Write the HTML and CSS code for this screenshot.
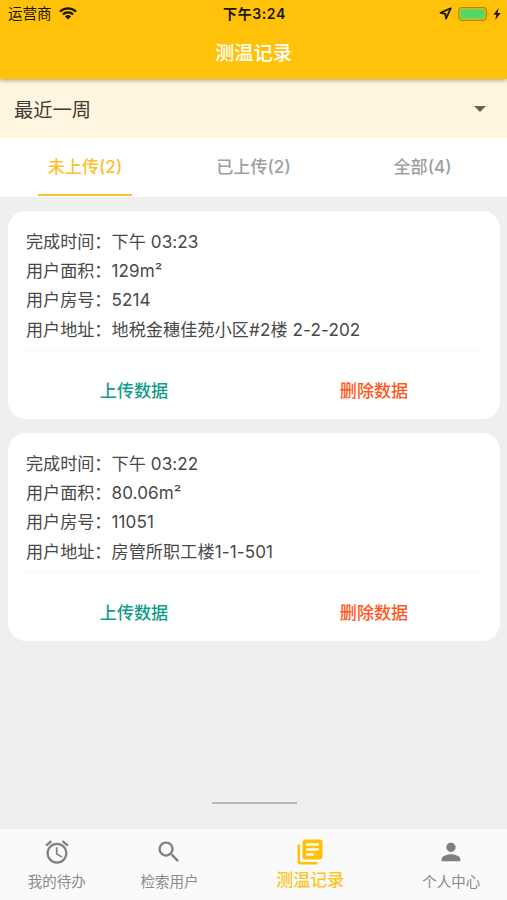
FILE: index.html
```
<!DOCTYPE html>
<html lang="zh-CN">
<head>
    <meta charset="UTF-8">
    <meta name="viewport" content="width=device-width, initial-scale=1.0">
    <title>测温记录</title>
    <link rel="stylesheet" href="styles.css">
</head>
<body>
    <header class="header">
        <div class="status-bar">
            <div class="status-left">
                <span>运营商</span>
                <svg class="wifi" viewBox="0 0 18 13">
                    <path d="M1 4.6a11.5 11.5 0 0 1 16 0M3.9 7.5a7.4 7.4 0 0 1 10.2 0" fill="none" stroke="#1c1700" stroke-width="2.3"/>
                    <path d="M9 12.6L5.9 9.5a4.5 4.5 0 0 1 6.2 0z" fill="#1c1700"/>
                </svg>
            </div>
            <div class="status-time">下午3:24</div>
            <div class="status-right">
                <svg class="location" viewBox="0 0 12 12">
                    <path d="M10.8 1.2L1.4 5.4l4.4.9.7 4.4z" fill="none" stroke="#1c1700" stroke-width="1.6" stroke-linejoin="round"/>
                </svg>
                <svg class="battery" viewBox="0 0 32 14">
                    <rect x=".7" y=".7" width="27.6" height="12.6" rx="3" fill="none" stroke="#a9861a" stroke-width="1.2"/>
                    <rect x="2.3" y="2.3" width="24.4" height="9.4" rx="1.4" fill="#4cd964"/>
                    <path d="M29.8 4.8q1.8 2.2 0 4.4z" fill="#a9861a"/>
                </svg>
                <svg class="bolt" viewBox="0 0 8 12">
                    <path d="M5.6 0L.4 6.8h3L2.2 12l5.4-7.1H4.5z" fill="#1c1700"/>
                </svg>
            </div>
        </div>
        <h1>测温记录</h1>
    </header>

    <div class="filter">
        <span>最近一周</span>
        <svg class="arrow" viewBox="0 0 12 6"><path d="M0 0h12L6 6z" fill="#66625a"/></svg>
    </div>

    <div class="tabs">
        <div class="tab active"><span>未上传(2)</span></div>
        <div class="tab"><span>已上传(2)</span></div>
        <div class="tab"><span>全部(4)</span></div>
    </div>

    <main class="content">
        <div class="card">
            <div class="info">
                <p><span class="label">完成时间：</span>下午 03:23</p>
                <p><span class="label">用户面积：</span>129m²</p>
                <p><span class="label">用户房号：</span>5214</p>
                <p><span class="label">用户地址：</span>地税金穗佳苑小区#2楼 2-2-202</p>
            </div>
            <div class="actions">
                <span class="upload">上传数据</span>
                <span class="delete">删除数据</span>
            </div>
        </div>
        <div class="card">
            <div class="info">
                <p><span class="label">完成时间：</span>下午 03:22</p>
                <p><span class="label">用户面积：</span>80.06m²</p>
                <p><span class="label">用户房号：</span>11051</p>
                <p><span class="label">用户地址：</span>房管所职工楼1-1-501</p>
            </div>
            <div class="actions">
                <span class="upload">上传数据</span>
                <span class="delete">删除数据</span>
            </div>
        </div>
        <div class="end-line"></div>
    </main>

    <nav class="bottom-nav">
        <div class="nav-item">
            <svg viewBox="0 0 24 24"><path d="M22 5.72l-4.6-3.86-1.29 1.53 4.6 3.86L22 5.72zM7.88 3.39L6.6 1.86 2 5.71l1.29 1.53 4.59-3.85zM12.5 8H11v6l4.75 2.85.75-1.23-4-2.37V8zM12 4c-4.97 0-9 4.03-9 9s4.02 9 9 9c4.97 0 9-4.03 9-9s-4.03-9-9-9zm0 16c-3.87 0-7-3.13-7-7s3.13-7 7-7 7 3.13 7 7-3.13 7-7 7z"/></svg>
            <span>我的待办</span>
        </div>
        <div class="nav-item">
            <svg viewBox="0 0 24 24"><path d="M15.5 14h-.79l-.28-.27C15.41 12.59 16 11.11 16 9.5 16 5.91 13.09 3 9.5 3S3 5.91 3 9.5 5.91 16 9.5 16c1.61 0 3.09-.59 4.23-1.57l.27.28v.79l5 4.99L20.49 19l-4.99-5zm-6 0C7.01 14 5 11.99 5 9.5S7.01 5 9.5 5 14 7.01 14 9.5 11.99 14 9.5 14z"/></svg>
            <span>检索用户</span>
        </div>
        <div class="nav-item active">
            <svg viewBox="0 0 24 24"><path d="M4 6H2v14c0 1.1.9 2 2 2h14v-2H4V6zm16-4H8c-1.1 0-2 .9-2 2v12c0 1.1.9 2 2 2h12c1.1 0 2-.9 2-2V4c0-1.1-.9-2-2-2zm-1 9H9V9h10v2zm-4 4H9v-2h6v2zm4-8H9V5h10v2z"/></svg>
            <span>测温记录</span>
        </div>
        <div class="nav-item">
            <svg viewBox="0 0 24 24"><path d="M12 12c2.21 0 4-1.79 4-4s-1.79-4-4-4-4 1.79-4 4 1.79 4 4 4zm0 2c-2.67 0-8 1.34-8 4v2h16v-2c0-2.66-5.33-4-8-4z"/></svg>
            <span>个人中心</span>
        </div>
    </nav>
</body>
</html>
```
FILE: styles.css
```
* {
    box-sizing: border-box;
}
body {
    font-family: Inter, "Noto Sans CJK SC", sans-serif;
    background-color: #efefef;
    color: #484848;
    margin: 0;
    height: 900px;
    display: flex;
    flex-direction: column;
    overflow: hidden;
}
svg {
    display: block;
}
.header {
    height: 79px;
    flex-shrink: 0;
    background-color: #ffc10a;
    box-shadow: 0 1px 5px rgba(0, 0, 0, 0.4);
    z-index: 1;
}
.status-bar {
    height: 27px;
    padding: 0 6px 0 8px;
    display: grid;
    grid-template-columns: 1fr auto 1fr;
    align-items: center;
    font-size: 14.5px;
    line-height: 27px;
    color: #1c1700;
}
.status-left, .status-right {
    display: flex;
    align-items: center;
}
.status-right {
    justify-content: flex-end;
}
.status-time {
    font-weight: 600;
    font-size: 14px;
    letter-spacing: 0.6px;
}
.wifi {
    width: 18px;
    height: 13px;
    margin-left: 7px;
}
.location {
    width: 13px;
    height: 13px;
    margin-right: 6px;
}
.battery {
    width: 32px;
    height: 14px;
    margin-right: 3px;
}
.bolt {
    width: 8px;
    height: 12px;
}
.header h1 {
    margin: 0;
    font-size: 19.3px;
    font-weight: 500;
    line-height: 53px;
    text-align: center;
    color: #fff;
}
.filter {
    height: 59px;
    flex-shrink: 0;
    padding: 0 21px 0 14px;
    display: flex;
    align-items: center;
    justify-content: space-between;
    background-color: #fff6df;
    color: #3d3a33;
    font-size: 19.3px;
}
.arrow {
    width: 12px;
    height: 6px;
}
.tabs {
    height: 59px;
    flex-shrink: 0;
    display: grid;
    grid-template-columns: repeat(3, 1fr);
    background-color: #fff;
    font-size: 17.1px;
    font-weight: 500;
    color: #9e9e9e;
}
.tab {
    display: flex;
    justify-content: center;
}
.tab span {
    line-height: 57px;
    height: 58px;
}
.tab.active span {
    padding: 0 10px;
    margin-left: 1px;
    border-bottom: 2px solid #fbc02d;
    color: #fbc02d;
}
.content {
    flex: 1;
    padding: 14px 7px 0 8px;
}
.card {
    height: 208px;
    margin-bottom: 14px;
    padding: 16px 20px 0 18px;
    background-color: #fff;
    border-radius: 18px;
}
.info {
    height: 124px;
    border-bottom: 1px solid #f6f6f6;
}
.info p {
    margin: 0;
    font-size: 17.1px;
    line-height: 29.2px;
    letter-spacing: 0.1px;
}
.label {
    letter-spacing: 0;
}
.actions {
    display: grid;
    grid-template-columns: 1fr 1fr;
    margin: 0 -14px 0 -12px;
    text-align: center;
    font-size: 17.1px;
    font-weight: 500;
    line-height: 80px;
}
.upload {
    color: #0f9d8a;
}
.delete {
    color: #ff5722;
}
.end-line {
    width: 85px;
    height: 2px;
    margin: 161px auto 0;
    background-color: #b9b9b9;
}
.bottom-nav {
    height: 72px;
    flex-shrink: 0;
    display: grid;
    grid-template-columns: 2fr 2fr 3fr 2fr;
    background-color: #fafafa;
    border-top: 1px solid #e9e9e9;
    color: #8a8a8a;
    fill: #808080;
}
.nav-item {
    display: flex;
    flex-direction: column;
    align-items: center;
    padding: 9px 0 0 1px;
    font-size: 14.5px;
    line-height: 31px;
}
.nav-item svg {
    width: 28px;
    height: 28px;
}
.nav-item.active {
    color: #ffc51f;
    fill: #ffc107;
    font-size: 17px;
    font-weight: 500;
    line-height: 26px;
    padding-top: 8px;
}
.nav-item.active svg {
    width: 30px;
    height: 30px;
}
```
